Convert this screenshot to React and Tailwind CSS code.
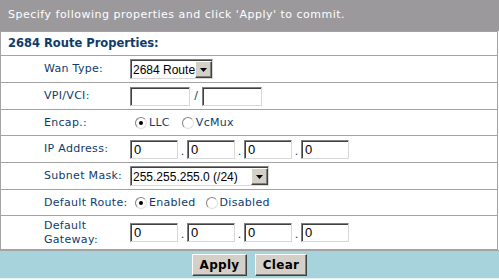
import React from "react";

const F = { fontFamily: "'DejaVu Sans', Verdana, sans-serif" };

function TextBox({ w, value = "" }) {
  return (
    <div
      className={`${w} h-[19px] bg-white border border-t-[#808080] border-l-[#808080] border-r-[#d8d8d8] border-b-[#d8d8d8] shadow-[inset_1px_1px_0_#404040] flex items-center pl-[3px] text-[13px] text-black leading-none`}
      style={{ fontFamily: "'Liberation Sans', Arial, sans-serif" }}
    >
      {value}
    </div>
  );
}

function Arrow() {
  return (
    <div className="w-[17px] h-full bg-[#d4d0c8] border border-t-[#ffffff] border-l-[#ffffff] border-r-[#404040] border-b-[#404040] shadow-[inset_-1px_-1px_0_#808080] flex items-center justify-center">
      <svg width="7" height="4" viewBox="0 0 7 4">
        <path d="M0 0h7L3.5 4z" fill="#000" />
      </svg>
    </div>
  );
}

function Select({ w, value }) {
  return (
    <div
      className={`${w} h-[20px] bg-white border border-t-[#808080] border-l-[#808080] border-r-[#d8d8d8] border-b-[#d8d8d8] shadow-[inset_1px_1px_0_#404040] flex items-stretch pl-[1px] pt-[1px]`}
    >
      <div
        className="flex-1 flex items-center pl-[1px] text-[12px] text-black leading-none whitespace-nowrap"
        style={{ fontFamily: "'Liberation Sans', Arial, sans-serif" }}
      >
        {value}
      </div>
      <Arrow />
    </div>
  );
}

function Radio({ checked, label }) {
  return (
    <div className="flex items-center">
      <div className="w-[12px] h-[12px] rounded-full bg-white border border-t-[#808080] border-l-[#808080] border-r-[#e0e0e0] border-b-[#e0e0e0] flex items-center justify-center">
        {checked && <div className="w-[4px] h-[4px] rounded-full bg-black" />}
      </div>
      <span className="ml-[2px] text-[11px] text-[#0f3b6b] pt-[2px] tracking-[0.3px]" style={F}>
        {label}
      </span>
    </div>
  );
}

function Row({ h, label, children, last }) {
  return (
    <div className={`flex items-center ${h} ${last ? "" : "border-b border-[#a3a3a3]"}`}>
      <div className="w-[129px] pl-[43px] text-[11px] text-[#0f3b6b] leading-[14px] tracking-[0.3px]" style={F}>
        {label}
      </div>
      <div className="flex items-center">{children}</div>
    </div>
  );
}

function Dot() {
  return <span className="w-[9px] text-center text-[11px] text-[#0f3b6b] self-end leading-none pb-[2px]" style={F}>.</span>;
}

function IP() {
  return (
    <div className="flex items-center">
      <TextBox w="w-[48px]" value="0" />
      <Dot />
      <TextBox w="w-[48px]" value="0" />
      <Dot />
      <TextBox w="w-[48px]" value="0" />
      <Dot />
      <TextBox w="w-[48px]" value="0" />
    </div>
  );
}

function Btn({ children, w }) {
  return (
    <div
      className={`${w} h-[22px] bg-[#d4d0c8] border border-t-[#ffffff] border-l-[#ffffff] border-r-[#404040] border-b-[#404040] shadow-[inset_-1px_-1px_0_#808080] flex items-center justify-center text-[12px] font-bold text-black tracking-[0.3px]`}
      style={F}
    >
      {children}
    </div>
  );
}

export default function App() {
  return (
    <div className="w-[499px] h-[280px] bg-white overflow-hidden relative">
      <div className="h-[31px] bg-[#9b999b] flex items-center pl-[8px] text-[11px] text-white tracking-[0.5px]" style={F}>
        Specify following properties and click 'Apply' to commit.
      </div>
      <div className="w-[498px] border-l border-r border-t border-[#a3a3a3]">
        <div className="h-[24px] flex items-center pl-[7px] border-b border-[#a3a3a3] text-[11.5px] font-bold text-[#0f3b6b]" style={F}>
          2684 Route Properties:
        </div>
        <Row h="h-[27px]" label="Wan Type:">
          <Select w="w-[83px]" value="2684 Route" />
        </Row>
        <Row h="h-[27px]" label="VPI/VCI:">
          <TextBox w="w-[60px]" />
          <span className="w-[12px] text-center text-[11px] text-[#0f3b6b] self-end pb-[1px]" style={F}>/</span>
          <TextBox w="w-[60px]" />
        </Row>
        <Row h="h-[26px]" label="Encap.:">
          <div className="flex items-center pl-[5px] gap-[12px]">
            <Radio checked label="LLC" />
            <Radio label="VcMux" />
          </div>
        </Row>
        <Row h="h-[27px]" label="IP Address:">
          <IP />
        </Row>
        <Row h="h-[27px]" label="Subnet Mask:">
          <Select w="w-[139px]" value="255.255.255.0 (/24)" />
        </Row>
        <Row h="h-[26px]" label="Default Route:">
          <div className="flex items-center pl-[5px] gap-[10px]">
            <Radio checked label="Enabled" />
            <Radio label="Disabled" />
          </div>
        </Row>
        <Row h="h-[34px]" label={<>Default<br />Gateway:</>}>
          <IP />
        </Row>
      </div>
      <div className="h-[29px] bg-[#a7d3dd] border-t border-[#a3a3a3] flex items-center justify-center gap-[8px] border-b border-b-[#e8f3f6]">
        <Btn w="w-[55px]">Apply</Btn>
        <Btn w="w-[52px]">Clear</Btn>
      </div>
    </div>
  );
}
